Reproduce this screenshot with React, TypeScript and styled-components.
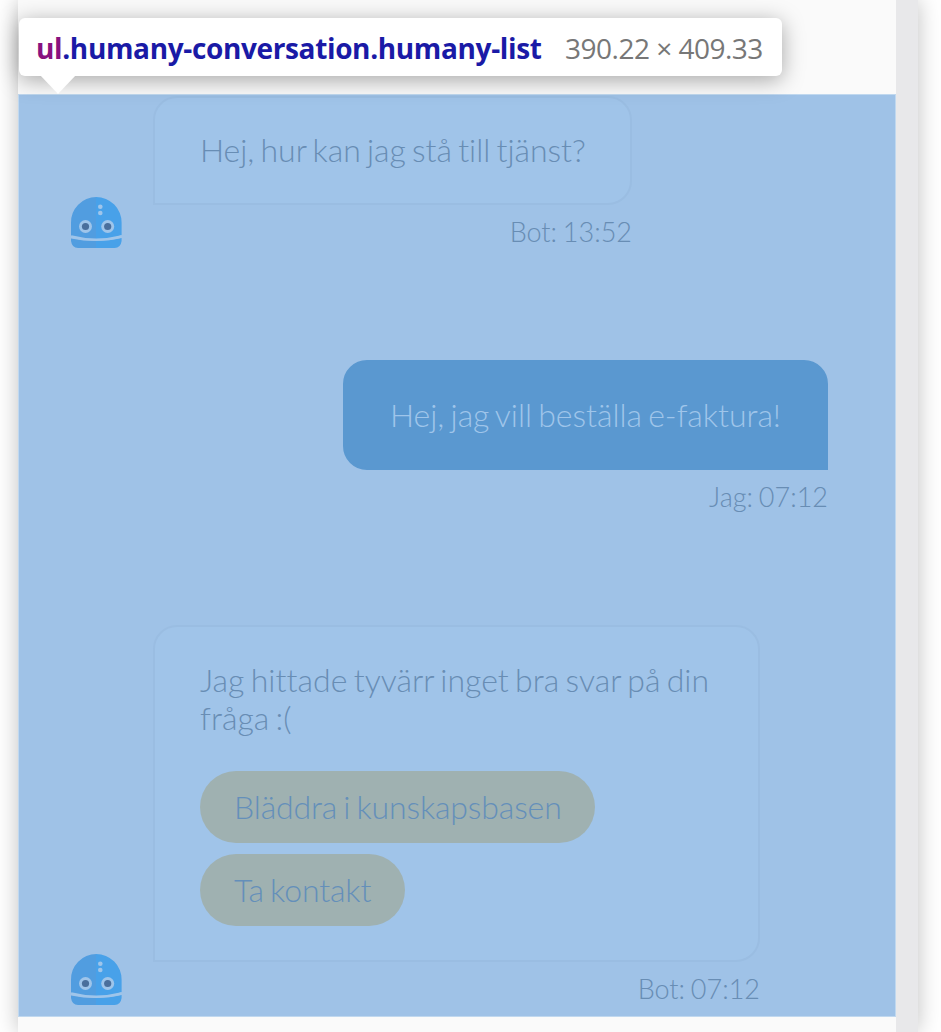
import React from "react";
import styled, { createGlobalStyle } from "styled-components";

const GlobalStyle = createGlobalStyle`
  * { box-sizing: border-box; }
  body { margin: 0; background: #fff; overflow: hidden; }
`;

const Page = styled.div`
  width: 941px;
  height: 1032px;
  padding: 0 23px 0 18px;
  overflow: hidden;
  font-family: Lato, sans-serif;
  font-weight: 300;
  color: #688db4;
`;

const Widget = styled.div`
  position: relative;
  display: flex;
  width: 900px;
  height: 1032px;
  background: #fafafa;
  box-shadow: 0 0 21px rgba(0, 0, 0, 0.25);
`;

const Main = styled.main`
  width: 878px;
  padding-top: 94px;
`;

const ScrollTrack = styled.div`
  width: 22px;
  background: #e8e8ea;
`;

const Conversation = styled.ul`
  display: flex;
  flex-direction: column;
  width: 878px;
  height: 923px;
  margin: 0;
  padding: 1px 67px 0 51px;
  list-style: none;
  background: #9fc2e7;
  border: 1px solid #c0d8ef;
`;

const Row = styled.li<{ $mine?: boolean; $height: number }>`
  display: flex;
  flex: none;
  align-items: flex-start;
  justify-content: ${(p) => (p.$mine ? "flex-end" : "flex-start")};
  height: ${(p) => p.$height}px;
`;

const Avatar = styled.div<{ $offset: number }>`
  flex: none;
  width: 52px;
  height: 52px;
  margin: ${(p) => p.$offset}px 31px 0 0;
  svg { display: block; }
`;

const Message = styled.div<{ $width: number }>`
  width: ${(p) => p.$width}px;
`;

const Bubble = styled.div<{ $mine?: boolean; $height: number; $top?: number; $tracking?: number }>`
  height: ${(p) => p.$height}px;
  padding: ${(p) => p.$top ?? 34}px 40px 0 45px;
  font-size: 32px;
  line-height: 38px;
  letter-spacing: ${(p) => p.$tracking ?? -0.04}px;
  word-spacing: -2.4px;
  white-space: nowrap;
  border: 2px solid ${(p) => (p.$mine ? "#5a98d0" : "#9abde2")};
  border-radius: ${(p) => (p.$mine ? "24px 24px 0 24px" : "24px 24px 24px 0")};
  background: ${(p) => (p.$mine ? "#5a98d0" : "#a0c4e9")};
  color: ${(p) => (p.$mine ? "#9fc5ea" : "inherit")};
`;

const Stamp = styled.div`
  margin-top: 10px;
  font-size: 27px;
  line-height: 34px;
  word-spacing: -1.5px;
  text-align: right;
`;

const Actions = styled.div`
  display: flex;
  flex-direction: column;
  align-items: flex-start;
  gap: 11px;
  margin-top: 34px;
`;

const Action = styled.button<{ $width: number }>`
  width: ${(p) => p.$width}px;
  height: 72px;
  padding: 0 0 0 34px;
  border: 0;
  border-radius: 36px;
  background: #9fb1b1;
  color: #648fba;
  font: inherit;
  letter-spacing: -0.14px;
  word-spacing: inherit;
  text-align: left;
  white-space: nowrap;
`;

const Tooltip = styled.div`
  position: absolute;
  top: 18px;
  left: 1px;
  display: flex;
  align-items: center;
  width: 763px;
  height: 58px;
  padding: 2px 0 0 17px;
  border-radius: 6px;
  background: #fff;
  box-shadow: 0 4px 22px rgba(0, 0, 0, 0.34);
  font: 400 28px/38px "Open Sans", "Noto Sans", sans-serif;
  white-space: nowrap;
`;

const Pointer = styled.svg`
  position: absolute;
  top: 57px;
  left: 21px;
`;

const Selector = styled.span`
  width: 529px;
  font-weight: 700;
  color: #1a1aa6;
  letter-spacing: -0.36px;
`;

const TagName = styled.span`
  color: #881280;
`;

const Size = styled.span`
  color: #777;
  letter-spacing: -0.5px;
`;

function Bot() {
  return (
    <svg width="52" height="52" viewBox="0 0 52 52">
      <path d="M1 38V27a25.3 25.3 0 0 1 25.3-26V44Q13 44 1 40Z" fill="#519de0" />
      <path d="M26 1a25.5 25.5 0 0 1 25.6 26v12Q40 44 26 44Z" fill="#48a1e9" />
      <path d="M1 42.5Q13 45 26 45v7H8q-6 0-7-7Z" fill="#519de0" />
      <path d="M26 45q14 0 25.6-3V45q-1 7-7 7H26Z" fill="#48a1e9" />
      <path d="M1 40.5q25 6.5 50.6 0" fill="none" stroke="#9fc5ea" strokeWidth="2.6" />
      <g fill="#9fc5ea">
        <circle cx="30.3" cy="10.7" r="2.3" />
        <circle cx="30.3" cy="17" r="2.3" />
        <circle cx="15.5" cy="30.5" r="6.5" />
        <circle cx="37.7" cy="30.5" r="6.5" />
      </g>
      <circle cx="15.5" cy="30.5" r="3.6" fill="#4a6f9c" />
      <circle cx="37.7" cy="30.5" r="3.6" fill="#4a6f9c" />
    </svg>
  );
}

export default function App() {
  return (
    <Page>
      <GlobalStyle />
      <Widget>
        <Main>
          <Conversation>
            <Row $height={264}>
              <Avatar $offset={100}><Bot /></Avatar>
              <Message $width={479}>
                <Bubble $height={109} $top={33}>Hej, hur kan jag stå till tjänst?</Bubble>
                <Stamp>Bot: 13:52</Stamp>
              </Message>
            </Row>
            <Row $mine $height={265}>
              <Message $width={485}>
                <Bubble $mine $height={110}>Hej, jag vill beställa e-faktura!</Bubble>
                <Stamp>Jag: 07:12</Stamp>
              </Message>
            </Row>
            <Row $height={390}>
              <Avatar $offset={328}><Bot /></Avatar>
              <Message $width={607}>
                <Bubble $height={337} $tracking={0.02}>
                  Jag hittade tyvärr inget bra svar på din<br />fråga :(
                  <Actions>
                    <Action $width={395}>Bläddra i kunskapsbasen</Action>
                    <Action $width={205}>Ta kontakt</Action>
                  </Actions>
                </Bubble>
                <Stamp>Bot: 07:12</Stamp>
              </Message>
            </Row>
          </Conversation>
        </Main>
        <ScrollTrack />
        <Tooltip>
          <Selector><TagName>ul</TagName>.humany-conversation.humany-list</Selector>
          <Size>390.22 × 409.33</Size>
          <Pointer width="36" height="19" viewBox="0 0 36 19">
            <path d="M0 0H36L18 19Z" fill="#fff" />
          </Pointer>
        </Tooltip>
      </Widget>
    </Page>
  );
}
